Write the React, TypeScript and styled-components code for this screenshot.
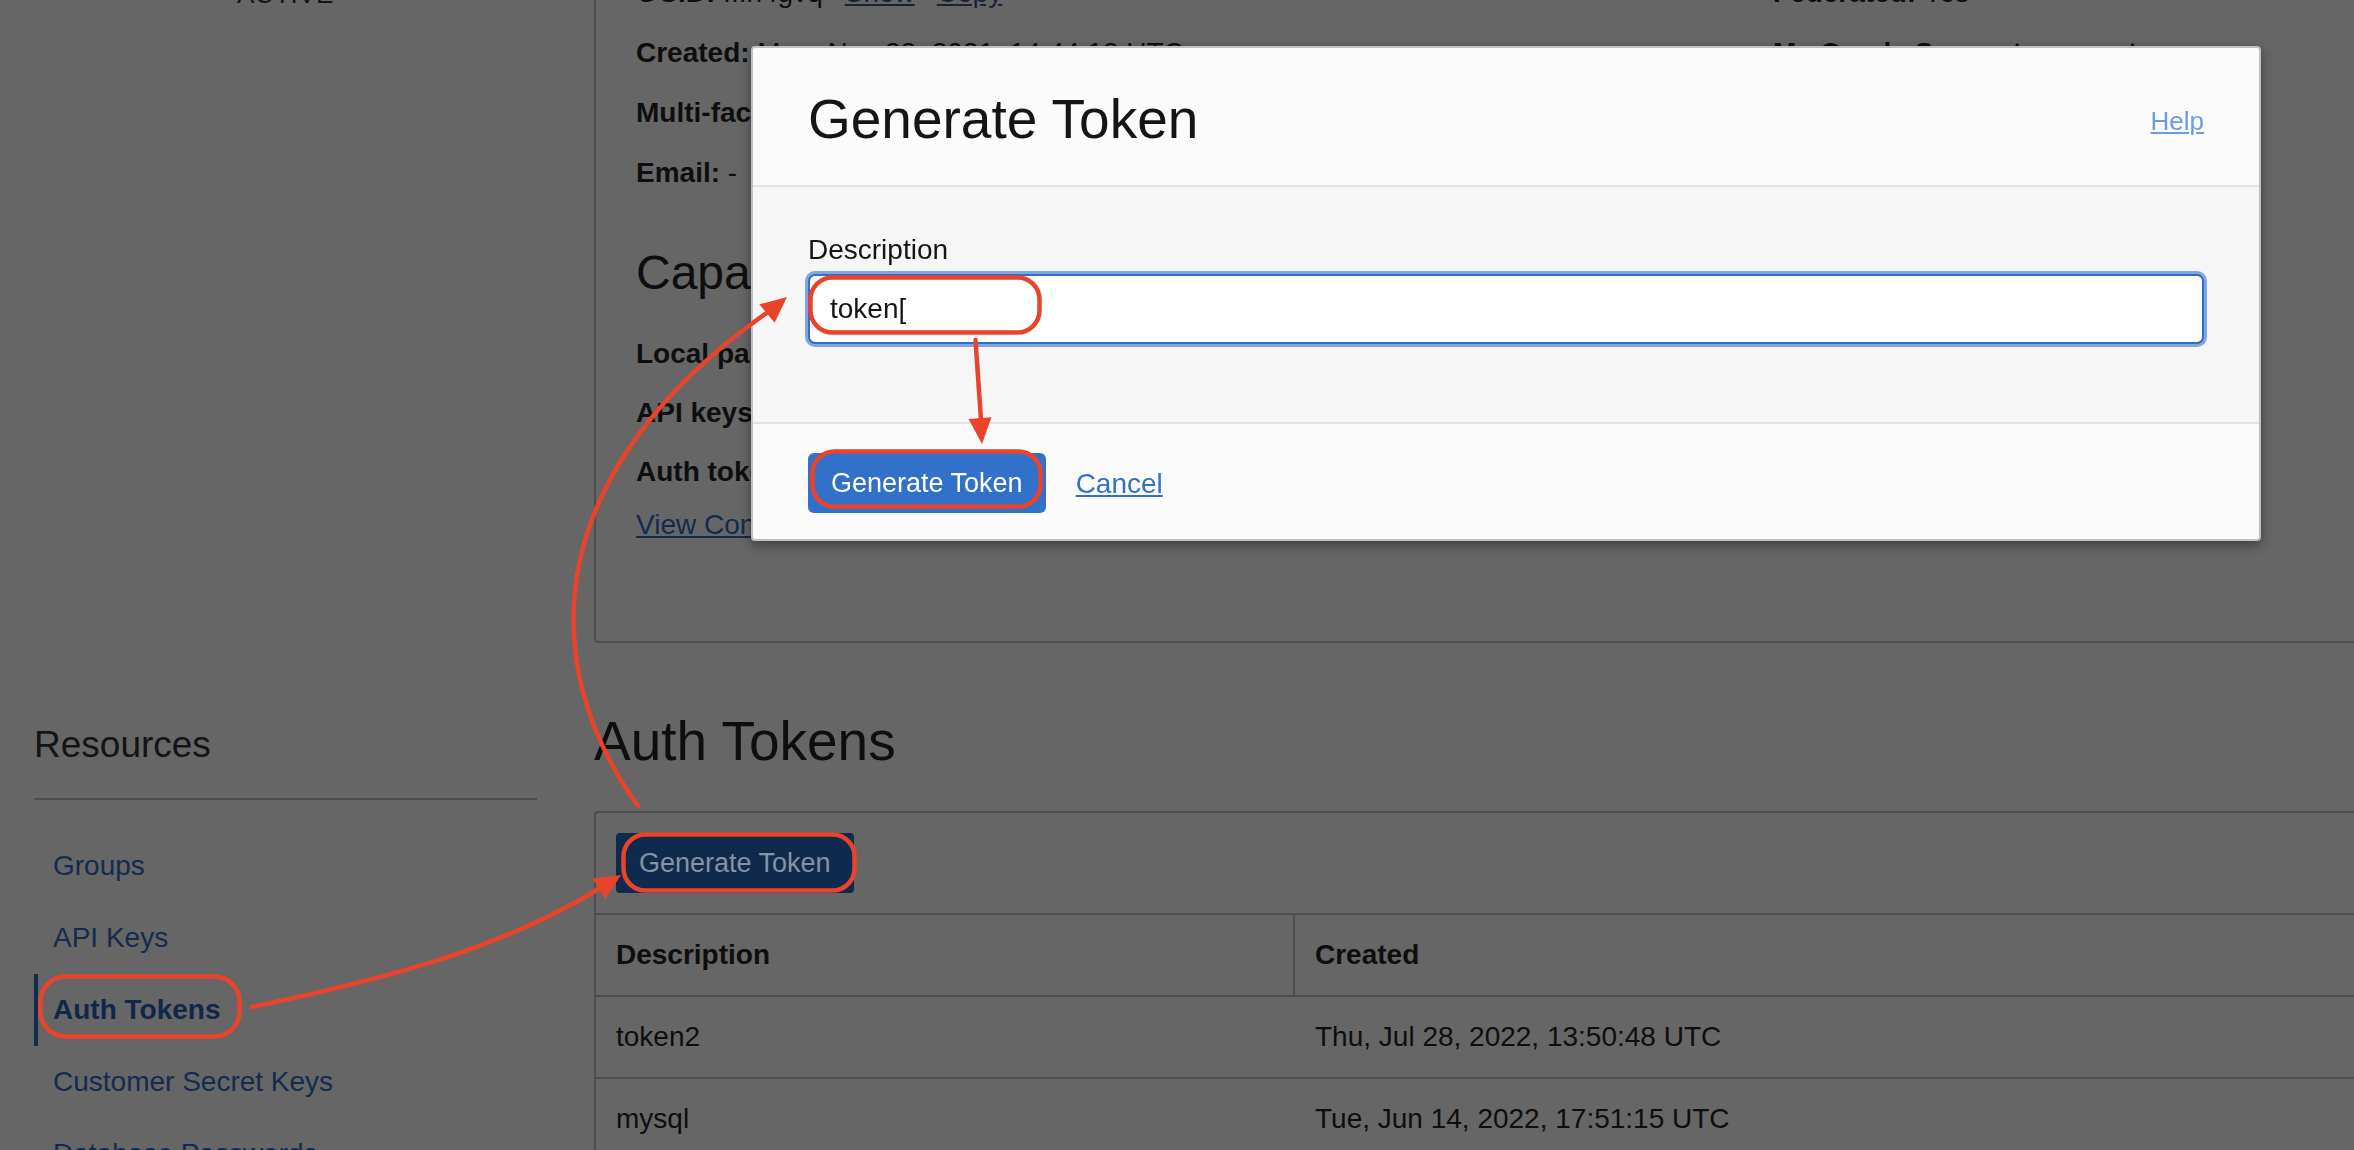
import React from "react";
import styled, { createGlobalStyle } from "styled-components";

const GlobalStyle = createGlobalStyle`
  *, *::before, *::after { box-sizing: border-box; }
  html, body { margin: 0; padding: 0; overflow: hidden; }
  body {
    width: 2354px;
    height: 1150px;
    background: #666666;
    font-family: "Liberation Sans", Arial, Helvetica, sans-serif;
    color: #101010;
  }
`;

const LINE = "#4d4e51";
const DIM_LINK = "#132b4f";
const RED = "#E9442B";

/* ---------- dimmed page ---------- */

const Page = styled.div`
  width: 2420px;
  margin-top: -140px;
  padding-left: 34px;
  display: grid;
  grid-template-columns: 503px 1829px;
  column-gap: 57px;
  align-items: start;
`;

const AvatarColumn = styled.div`
  display: flex;
  flex-direction: column;
  align-items: center;
  gap: 15px;
  padding-top: 8px;
`;

const Avatar = styled.div`
  width: 96px;
  height: 96px;
  border-radius: 50%;
  background: #3f5a45;
`;

const Status = styled.div`
  font-size: 26px;
  line-height: 30px;
  color: #151515;
  letter-spacing: 0.5px;
`;

const DetailsPanel = styled.section`
  border: 2px solid ${LINE};
  border-radius: 4px;
`;

const TabBar = styled.div`
  height: 62px;
  border-bottom: 2px solid ${LINE};
  display: flex;
  align-items: flex-end;
  gap: 40px;
  padding: 0 40px;
`;

const Tab = styled.div<{ $active?: boolean }>`
  font-size: 26px;
  line-height: 30px;
  padding-bottom: 14px;
  color: ${(p) => (p.$active ? "#101010" : DIM_LINK)};
  font-weight: ${(p) => (p.$active ? 700 : 400)};
`;

const PanelBody = styled.div`
  padding: 53px 40px 100px;
`;

const InfoGrid = styled.div<{ $rows: number }>`
  display: grid;
  grid-template-columns: 1137px 1fr;
  grid-template-rows: repeat(${(p) => p.$rows}, 32px);
  grid-auto-flow: column;
  row-gap: ${(p) => (p.$rows === 4 ? 28 : 27)}px;
`;

const InfoItem = styled.div`
  font-size: 28px;
  line-height: 32px;
  white-space: nowrap;
  color: #0e0e0e;
`;

const Label = styled.span`
  font-weight: 700;
`;

const InlineLink = styled.span`
  margin-left: 22px;
  color: #1a2436;
  text-decoration: underline;
`;

const CapHeading = styled.h3`
  margin: 56px 0 0;
  font-size: 48px;
  line-height: 56px;
  font-weight: 400;
  color: #0e0e0e;
`;

const CapList = styled(InfoGrid)`
  margin-top: 37px;
`;

const ConfigLink = styled.a`
  display: block;
  width: fit-content;
  margin-top: 21px;
  font-size: 28px;
  line-height: 32px;
  color: ${DIM_LINK};
  text-decoration: underline;
`;

const Sidebar = styled.nav`
  padding-top: 80px;
`;

const ResourcesTitle = styled.h2`
  margin: 0;
  font-size: 37px;
  line-height: 44px;
  font-weight: 400;
  color: #141414;
  padding-bottom: 31px;
  border-bottom: 2px solid ${LINE};
`;

const NavList = styled.ul`
  list-style: none;
  margin: 30px 0 0;
  padding: 0;
`;

const NavItem = styled.li<{ $active?: boolean }>`
  border-left: 4px solid ${(p) => (p.$active ? "#142b4f" : "transparent")};
  padding: 20px 0 20px 15px;
  font-size: 28px;
  line-height: 32px;
  color: ${(p) => (p.$active ? "#10264a" : DIM_LINK)};
  font-weight: ${(p) => (p.$active ? 700 : 400)};
`;

const AuthSection = styled.section`
  padding-top: 66px;
`;

const SectionTitle = styled.h2`
  margin: 0;
  font-size: 55px;
  line-height: 64px;
  font-weight: 400;
  color: #0e0e0e;
`;

const TableCard = styled.div`
  margin-top: 38px;
  border: 2px solid ${LINE};
  border-radius: 4px;
`;

const Toolbar = styled.div`
  padding: 20px;
  border-bottom: 2px solid ${LINE};
  display: flex;
`;

const DimButton = styled.button`
  height: 60px;
  padding: 0 23px;
  border: none;
  border-radius: 4px;
  background: #0f2a4d;
  color: #8792a3;
  font-family: inherit;
  font-size: 27px;
`;

const DataTable = styled.table`
  width: 100%;
  border-collapse: separate;
  border-spacing: 0;
  table-layout: fixed;
`;

const DescCol = styled.col`
  width: 699px;
`;

const Th = styled.th`
  text-align: left;
  font-size: 28px;
  line-height: 32px;
  font-weight: 700;
  color: #0e0e0e;
  padding: 24px 20px;
  border-bottom: 2px solid ${LINE};
  &:first-child {
    border-right: 2px solid ${LINE};
  }
`;

const Td = styled.td`
  font-size: 28px;
  line-height: 32px;
  color: #0e0e0e;
  padding: 24px 20px;
  border-bottom: 2px solid ${LINE};
  white-space: nowrap;
`;

/* ---------- dialog ---------- */

const Dialog = styled.div`
  position: fixed;
  top: 46px;
  left: 751px;
  width: 1510px;
  background: #fbfbfb;
  border: 2px solid #bec1c4;
  border-radius: 4px;
  box-shadow: 0 4px 12px rgba(0, 0, 0, 0.4);
  overflow: hidden;
  z-index: 10;
`;

const DialogHeader = styled.header`
  height: 139px;
  padding: 4px 55px 0;
  border-bottom: 2px solid #e3e3e3;
  display: flex;
  align-items: center;
  justify-content: space-between;
`;

const DialogTitle = styled.h1`
  margin: 0;
  font-size: 55px;
  line-height: 64px;
  font-weight: 400;
  color: #161513;
`;

const HelpLink = styled.a`
  font-size: 26px;
  line-height: 32px;
  color: #6c9de0;
  text-decoration: underline;
  margin-top: 4px;
`;

const DialogBody = styled.div`
  background: #f6f6f6;
  padding: 47px 55px 78px;
`;

const FieldLabel = styled.label`
  display: block;
  font-size: 28px;
  line-height: 32px;
  color: #161513;
  margin-bottom: 8px;
`;

const TextField = styled.input`
  display: block;
  width: 100%;
  height: 70px;
  border: 2px solid #2f6fc7;
  border-radius: 7px;
  box-shadow: 0 0 0 3px #7fa6de;
  background: #ffffff;
  padding: 0 20px;
  font-family: inherit;
  font-size: 28px;
  color: #161513;
  outline: none;
`;

const DialogFooter = styled.footer`
  height: 117px;
  border-top: 2px solid #e3e3e3;
  padding: 2px 55px 0;
  display: flex;
  align-items: center;
  gap: 30px;
`;

const PrimaryButton = styled.button`
  height: 60px;
  padding: 2px 23px 0;
  border: none;
  border-radius: 6px;
  background: #3171c9;
  color: #ffffff;
  font-family: inherit;
  font-size: 27px;
`;

const CancelLink = styled.a`
  font-size: 28px;
  line-height: 32px;
  color: #3171c9;
  text-decoration: underline;
  margin-top: 2px;
`;

/* ---------- annotations ---------- */

const Annotations = styled.svg`
  position: fixed;
  left: 0;
  top: 0;
  width: 2354px;
  height: 1150px;
  pointer-events: none;
  z-index: 20;
`;

function head(tx: number, ty: number, dx: number, dy: number, len = 26, half = 12) {
  const m = Math.hypot(dx, dy);
  const ux = dx / m;
  const uy = dy / m;
  const bx = tx - ux * len;
  const by = ty - uy * len;
  const px = -uy;
  const py = ux;
  return `${tx},${ty} ${bx + px * half},${by + py * half} ${bx - px * half},${by - py * half}`;
}

const Markup: React.FC = () => (
  <Annotations viewBox="0 0 2354 1150">
    <g fill="none" stroke={RED} strokeWidth={4.5} strokeLinecap="round">
      <rect x={40.5} y={976.5} width={199} height={60} rx={25} />
      <rect x={810.5} y={277.5} width={229} height={55} rx={22} />
      <rect x={812.5} y={451.5} width={228} height={55} rx={22} />
      <rect x={623.5} y={834.5} width={231} height={56} rx={22} />
      <path d="M 975.5 340 L 981 420" />
      <path d="M 638 806 C 533 660, 543 470, 768 312" />
      <path d="M 252 1007 C 380 980, 500 950, 600 888" />
    </g>
    <g fill={RED} stroke="none">
      <polygon points={head(982, 444, 1, 13, 26, 11.5)} />
      <polygon points={head(787, 297, 20.5, -17)} />
      <polygon points={head(621, 875, 20, -12.5)} />
    </g>
  </Annotations>
);

export default function App() {
  return (
    <>
      <GlobalStyle />
      <Page>
        <AvatarColumn>
          <Avatar />
          <Status>ACTIVE</Status>
        </AvatarColumn>

        <DetailsPanel>
          <TabBar>
            <Tab $active>User Information</Tab>
            <Tab>Tags</Tab>
          </TabBar>
          <PanelBody>
            <InfoGrid $rows={4}>
              <InfoItem>
                <Label>OCID:</Label> ...n4gvq<InlineLink>Show</InlineLink>
                <InlineLink>Copy</InlineLink>
              </InfoItem>
              <InfoItem>
                <Label>Created:</Label> Mon, Nov 22, 2021, 14:44:13 UTC
              </InfoItem>
              <InfoItem>
                <Label>Multi-factor authentication:</Label> Disabled
              </InfoItem>
              <InfoItem>
                <Label>Email:</Label> -
              </InfoItem>
              <InfoItem>
                <Label>Federated:</Label> Yes
              </InfoItem>
              <InfoItem>
                <Label>My Oracle Support account:</Label> -
              </InfoItem>
            </InfoGrid>
            <CapHeading>Capabilities</CapHeading>
            <CapList $rows={3}>
              <InfoItem>
                <Label>Local password:</Label> Yes
              </InfoItem>
              <InfoItem>
                <Label>API keys:</Label> Yes
              </InfoItem>
              <InfoItem>
                <Label>Auth tokens:</Label> Yes
              </InfoItem>
            </CapList>
            <ConfigLink>View Configuration for Tenancy</ConfigLink>
          </PanelBody>
        </DetailsPanel>

        <Sidebar>
          <ResourcesTitle>Resources</ResourcesTitle>
          <NavList>
            <NavItem>Groups</NavItem>
            <NavItem>API Keys</NavItem>
            <NavItem $active>Auth Tokens</NavItem>
            <NavItem>Customer Secret Keys</NavItem>
            <NavItem>Database Passwords</NavItem>
          </NavList>
        </Sidebar>

        <AuthSection>
          <SectionTitle>Auth Tokens</SectionTitle>
          <TableCard>
            <Toolbar>
              <DimButton>Generate Token</DimButton>
            </Toolbar>
            <DataTable>
              <colgroup>
                <DescCol />
                <col />
              </colgroup>
              <thead>
                <tr>
                  <Th>Description</Th>
                  <Th>Created</Th>
                </tr>
              </thead>
              <tbody>
                <tr>
                  <Td>token2</Td>
                  <Td>Thu, Jul 28, 2022, 13:50:48 UTC</Td>
                </tr>
                <tr>
                  <Td>mysql</Td>
                  <Td>Tue, Jun 14, 2022, 17:51:15 UTC</Td>
                </tr>
              </tbody>
            </DataTable>
          </TableCard>
        </AuthSection>
      </Page>

      <Dialog role="dialog" aria-label="Generate Token">
        <DialogHeader>
          <DialogTitle>Generate Token</DialogTitle>
          <HelpLink>Help</HelpLink>
        </DialogHeader>
        <DialogBody>
          <FieldLabel htmlFor="token-description">Description</FieldLabel>
          <TextField id="token-description" defaultValue="token[" readOnly />
        </DialogBody>
        <DialogFooter>
          <PrimaryButton>Generate Token</PrimaryButton>
          <CancelLink>Cancel</CancelLink>
        </DialogFooter>
      </Dialog>

      <Markup />
    </>
  );
}
